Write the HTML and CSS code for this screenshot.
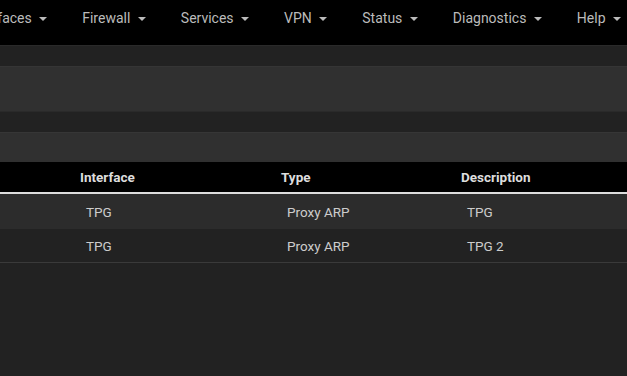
FILE: index.html
```html
<!DOCTYPE html>
<html lang="en">
  <head>
    <meta charset="UTF-8" />
    <meta name="viewport" content="width=device-width, initial-scale=1.0" />
    <title>Virtual IPs</title>
    <link rel="stylesheet" href="styles.css">
  </head>
  <body>
    <nav class="navbar">
      <ul class="nav-menu">
        <li>Interfaces <span class="caret"></span></li>
        <li>Firewall <span class="caret"></span></li>
        <li>Services <span class="caret"></span></li>
        <li>VPN <span class="caret"></span></li>
        <li>Status <span class="caret"></span></li>
        <li>Diagnostics <span class="caret"></span></li>
        <li>Help <span class="caret"></span></li>
      </ul>
    </nav>

    <div class="content">
      <div class="breadcrumb-bar"></div>

      <div class="panel">
        <div class="panel-heading"></div>
        <div class="vip-table">
          <div class="row head">
            <div class="cell"></div>
            <div class="cell">Interface</div>
            <div class="cell">Type</div>
            <div class="cell">Description</div>
          </div>
          <div class="row">
            <div class="cell"></div>
            <div class="cell">TPG</div>
            <div class="cell">Proxy ARP</div>
            <div class="cell">TPG</div>
          </div>
          <div class="row">
            <div class="cell"></div>
            <div class="cell">TPG</div>
            <div class="cell">Proxy ARP</div>
            <div class="cell">TPG 2</div>
          </div>
        </div>
      </div>
    </div>
  </body>
</html>
```

FILE: styles.css
```css
body {
  margin: 0;
  background: #222;
  font-family: Roboto, "Liberation Sans", sans-serif;
  color: #ccc;
  overflow: hidden;
}
.navbar {
  background: #000;
  height: 46px;
  border-bottom: 1px solid #2a2a2a;
  box-sizing: border-box;
  display: flex;
  justify-content: flex-end;
}
.nav-menu {
  list-style: none;
  margin: 0;
  padding: 0 6px 0 0;
  display: flex;
  flex-shrink: 0;
}
.nav-menu li {
  font-size: 14px;
  color: #bbb;
  line-height: 36px;
  padding: 0 0 0 35px;
  white-space: nowrap;
}
.caret {
  display: inline-block;
  width: 0;
  height: 0;
  margin-left: 4px;
  vertical-align: middle;
  border-top: 4px solid #bbb;
  border-left: 4px solid transparent;
  border-right: 4px solid transparent;
}
.content {
  padding-top: 20px;
}
.breadcrumb-bar {
  height: 46px;
  background: #303030;
  border-top: 1px solid #353535;
  border-bottom: 1px solid #2a2a2a;
  box-sizing: border-box;
  margin-bottom: 20px;
}
.panel-heading {
  height: 30px;
  background: #303030;
  border-top: 1px solid #363636;
  box-sizing: border-box;
}
.row {
  display: grid;
  grid-template-columns: 72px 201px 180px 1fr;
  background: #222;
  height: 33px;
  align-items: center;
  font-size: 13.5px;
  box-sizing: border-box;
}
.row:nth-child(2) {
  background: #2c2c2c;
  height: 35px;
}
.row:last-child {
  border-bottom: 1px solid #3a3a3a;
  height: 34px;
}
.row .cell {
  padding-left: 14px;
}
.row.head {
  background: #000;
  height: 32px;
  border-bottom: 2px solid #ddd;
  font-weight: bold;
  font-size: 13.5px;
  color: #ddd;
}
.row.head .cell {
  padding-left: 8px;
}
```
